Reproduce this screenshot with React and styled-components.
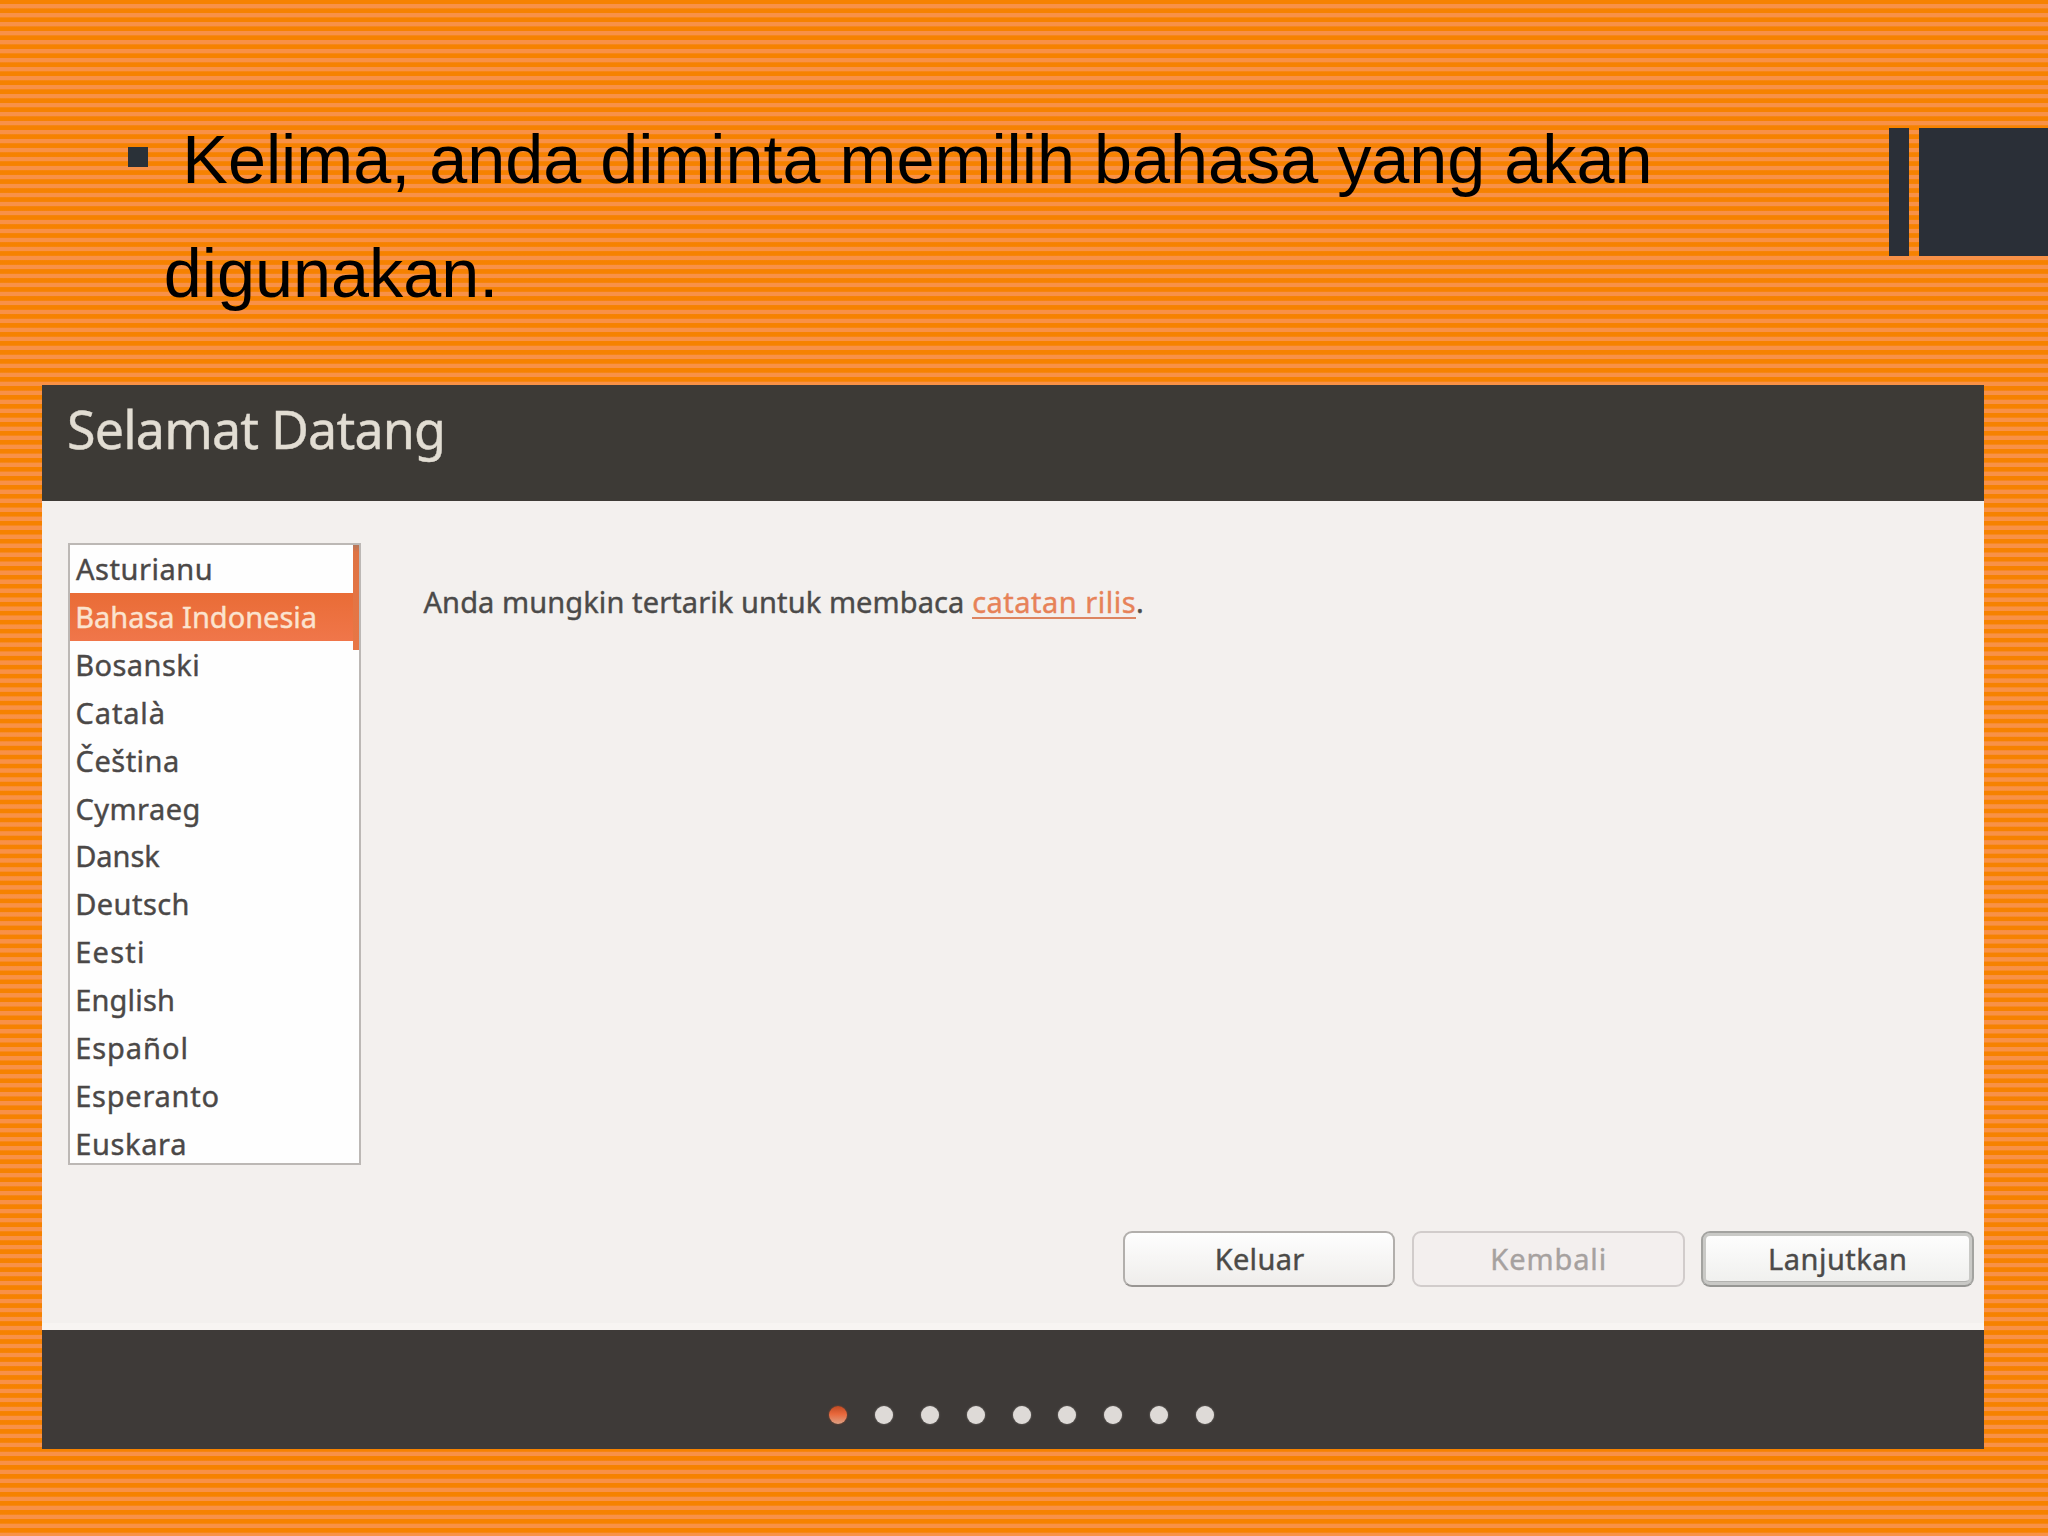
import React from "react";
import styled, { createGlobalStyle, css } from "styled-components";

const GlobalStyle = createGlobalStyle`
  *, *::before, *::after { box-sizing: border-box; }
  body { margin: 0; background: #f68200; }
`;

const ui = css`
  font-family: "Noto Sans", "Open Sans", sans-serif;
  font-size: 29px;
  font-weight: 400;
  -webkit-text-stroke: 0.4px currentColor;
`;

const Slide = styled.main`
  width: 2048px;
  height: 1536px;
  overflow: hidden;
  display: flex;
  flex-direction: column;
  background: repeating-linear-gradient(
    to bottom,
    #f68200 0,
    #f68200 3.6px,
    #f89147 4.4px,
    #f89147 8px,
    #f68200 8.8px,
    #f68200 8.992px
  );
`;

const TopArea = styled.header`
  display: flex;
  align-items: flex-start;
  height: 384.5px;
  flex: none;
`;

const BulletPoint = styled.div`
  display: flex;
  align-items: flex-start;
  flex: 1;
  padding: 102px 0 0 128px;
`;

const BulletSquare = styled.span`
  flex: none;
  width: 20px;
  height: 20px;
  margin: 45px 15.8px 0 0;
  background: #2a3138;
`;

const BulletText = styled.p`
  margin: 0;
  width: 1540px;
  text-indent: 18.5px;
  font-family: "Liberation Sans", Arial, sans-serif;
  font-size: 68.35px;
  line-height: 114.3px;
  color: #000;
`;

const Ornament = styled.div`
  display: flex;
  gap: 10px;
  height: 128px;
  margin-top: 128.4px;
`;

const OrnamentBlock = styled.span`
  width: ${(p) => p.$width}px;
  background: #2a2f37;
`;

const Installer = styled.section`
  display: flex;
  flex-direction: column;
  width: 1941.7px;
  height: 1064.3px;
  margin-left: 42.3px;
  background: #f3f0ee;
  ${ui}
`;

const TitleBar = styled.div`
  height: 116.6px;
  flex: none;
  padding-left: 24.7px;
  background: #3d3a36;
`;

const Title = styled.h1`
  margin: 0;
  font-size: 52px;
  font-weight: 400;
  line-height: 88px;
  letter-spacing: -0.82px;
  color: #e2ddd3;
`;

const Content = styled.div`
  display: flex;
  align-items: flex-start;
  padding: 41.9px 0 0 25.7px;
  height: 729.6px;
  flex: none;
`;

const LanguageBox = styled.div`
  display: flex;
  width: 293px;
  height: 622px;
  border: 2px solid #bcb8b5;
  background: #fefefe;
  overflow: hidden;
`;

const LanguageList = styled.ul`
  flex: 1;
  margin: 0;
  padding: 0;
  list-style: none;
`;

const Language = styled.li`
  height: 47.92px;
  padding-left: ${(p) => p.$inset}px;
  line-height: 47.92px;
  white-space: nowrap;
  letter-spacing: ${(p) => p.$tracking - 0.1}px;
  color: ${(p) => (p.$selected ? "#fbe3cf" : "#4b4847")};
  background: ${(p) => (p.$selected ? "linear-gradient(#e96c36, #f0764a)" : "none")};
`;

const ScrollThumb = styled.div`
  width: 7px;
  height: 105px;
  margin-right: -1px;
  background: linear-gradient(#b5775b 0, #df7343 7px, #e87645);
`;

const Message = styled.p`
  margin: 37px 0 0 62.5px;
  line-height: 44px;
  letter-spacing: 0.1px;
  white-space: nowrap;
  color: #4b4a49;
`;

const NotesLink = styled.a`
  letter-spacing: 0.5px;
  color: #e78258;
  border-bottom: 2px solid #dd8561;
  display: inline-block;
  line-height: 30px;
  height: 32px;
`;

const Actions = styled.div`
  display: flex;
  justify-content: flex-end;
  gap: 16.5px;
  padding-right: 10.4px;
`;

const tones = {
  normal: css`
    color: #4b4a47;
    border: 2px solid #b2afac;
    border-bottom-color: #999693;
    background: linear-gradient(#fefefe, #efedeb);
  `,
  disabled: css`
    color: #a6a19f;
    border: 2px solid #d1cccb;
    background: #f3efee;
  `,
  primary: css`
    color: #4b4a49;
    border: 2px solid #a3a3a0;
    border-bottom-color: #969693;
    background: linear-gradient(#fefefe, #efefed);
    box-shadow: inset 0 0 0 3px #c9c9c6, inset 0 -4px 0 #b2b2af;
  `,
};

const Button = styled.button`
  width: 272.6px;
  height: 56px;
  padding: 0 0 2px 1px;
  border-radius: 9px;
  ${ui}
  line-height: 52px;
  letter-spacing: ${(p) => p.$tracking}px;
  ${(p) => tones[p.$tone]}
`;

const Footer = styled.footer`
  display: flex;
  justify-content: center;
  align-items: flex-start;
  gap: 27.85px;
  margin-top: auto;
  height: 119px;
  padding: 76px 0 0 17px;
  background: #3e3a38;
  box-shadow: 0 -7px 0 #f7f4f2;
`;

const StepDot = styled.span`
  width: 18px;
  height: 18px;
  border-radius: 50%;
  background: ${(p) =>
    p.$active ? "linear-gradient(#c04a22, #e9683c 45%, #dda083)" : "#dedad7"};
  box-shadow: 0 0 2px ${(p) => (p.$active ? "#9a4a2e" : "#8a8683")};
`;

const languages = [
  ["Asturianu", 0.63],
  ["Bahasa Indonesia", 0.09],
  ["Bosanski", 0.57],
  ["Català", 0.96],
  ["Čeština", 0.6],
  ["Cymraeg", 0.53],
  ["Dansk", 0.06],
  ["Deutsch", 0.55],
  ["Eesti", 1.37],
  ["English", 0.28],
  ["Español", 1.05],
  ["Esperanto", 0.85],
  ["Euskara", 0.75],
];

const insetFor = (name) => (name[0] === "A" ? 6 : /[CČ]/.test(name[0]) ? 5.6 : 5.2);

export default function App() {
  return (
    <>
      <GlobalStyle />
      <Slide>
        <TopArea>
          <BulletPoint>
            <BulletSquare />
            <BulletText>
              Kelima, anda diminta memilih bahasa yang akan digunakan.
            </BulletText>
          </BulletPoint>
          <Ornament>
            <OrnamentBlock $width={20} />
            <OrnamentBlock $width={129} />
          </Ornament>
        </TopArea>
        <Installer>
          <TitleBar>
            <Title>Selamat Datang</Title>
          </TitleBar>
          <Content>
            <LanguageBox>
              <LanguageList>
                {languages.map(([name, tracking]) => (
                  <Language
                    key={name}
                    $tracking={tracking}
                    $inset={insetFor(name)}
                    $selected={name === "Bahasa Indonesia"}
                  >
                    {name}
                  </Language>
                ))}
              </LanguageList>
              <ScrollThumb />
            </LanguageBox>
            <Message>
              Anda mungkin tertarik untuk membaca <NotesLink>catatan rilis</NotesLink>.
            </Message>
          </Content>
          <Actions>
            <Button $tone="normal" $tracking={0.32}>Keluar</Button>
            <Button $tone="disabled" $tracking={0.9} disabled>Kembali</Button>
            <Button $tone="primary" $tracking={0.5}>Lanjutkan</Button>
          </Actions>
          <Footer>
            {Array.from({ length: 9 }, (_, i) => (
              <StepDot key={i} $active={i === 0} />
            ))}
          </Footer>
        </Installer>
      </Slide>
    </>
  );
}
